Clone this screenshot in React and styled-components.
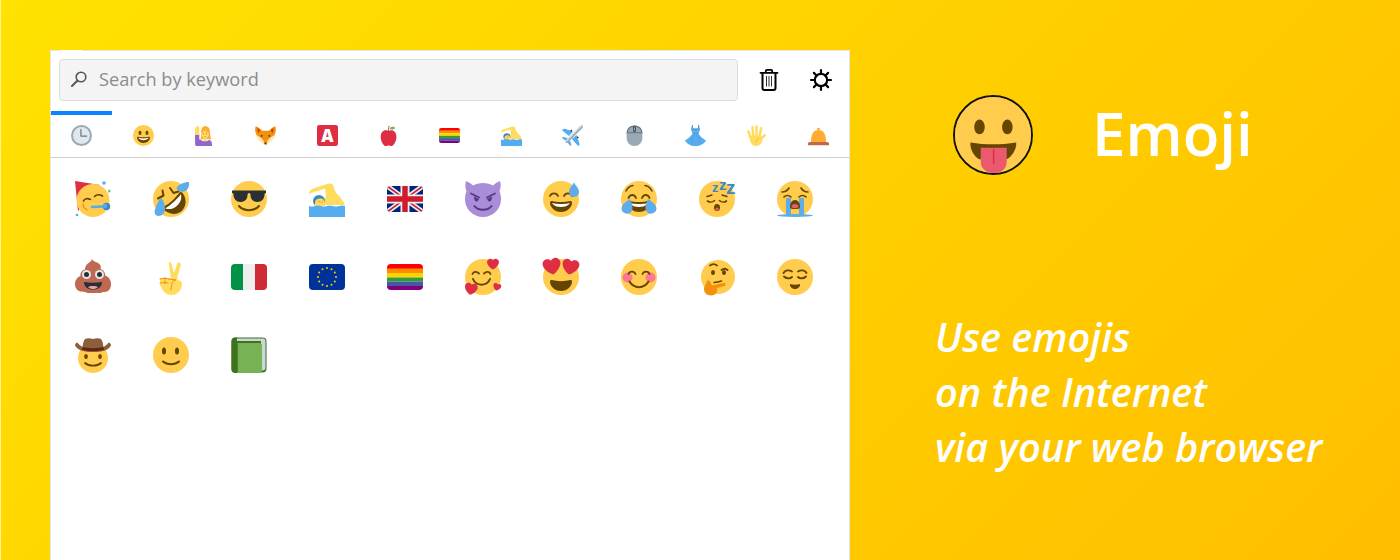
import React from 'react';
import styled, { createGlobalStyle } from 'styled-components';

const YELLOW = '#FFCC4D';
const BROWN = '#664500';
const SKIN = '#FFDC5D';
const BLUE = '#5DADEC';
const RED = '#DD2E44';
const ORANGE = '#F19020';

const HEART = 'M35.885 11.833c0-5.45-4.418-9.868-9.867-9.868-3.308 0-6.227 1.633-8.018 4.129-1.791-2.496-4.71-4.129-8.017-4.129-5.45 0-9.868 4.417-9.868 9.868 0 .772.098 1.52.266 2.241C1.751 22.587 11.216 31.568 18 34.034c6.783-2.466 16.249-11.447 17.617-19.959.17-.721.268-1.469.268-2.242z';

const Face = ({ cx = 18, cy = 18, r = 18 }) => <circle cx={cx} cy={cy} r={r} fill={YELLOW} />;
const Line = ({ d, w = 1.8, c = BROWN }) => <path d={d} fill="none" stroke={c} strokeWidth={w} strokeLinecap="round" strokeLinejoin="round" />;
const Grin = () => (
  <>
    <path fill={BROWN} d="M18 21c-3.6 0-6-.4-9-1-.7-.1-2 0-2 2 0 4 4.6 9 11 9s11-5 11-9c0-2-1.3-2.1-2-2-3 .6-5.4 1-9 1z" />
    <path fill="#fff" d="M9 22s3 1 9 1 9-1 9-1-2 4-9 4-9-4-9-4z" />
  </>
);
const Eyes = ({ x1 = 12, x2 = 24, y = 13.5, rx = 2.5, ry = 3.5 }) => (
  <>
    <ellipse cx={x1} cy={y} rx={rx} ry={ry} fill={BROWN} />
    <ellipse cx={x2} cy={y} rx={rx} ry={ry} fill={BROWN} />
  </>
);
const Heart = ({ x, y, s, rot = 0 }) => (
  <path fill={RED} d={HEART} transform={`translate(${x} ${y}) rotate(${rot}) scale(${s / 36}) translate(-18 -18)`} />
);
const Zed = ({ x, y, s }) => (
  <text x={x} y={y} fontFamily="'Liberation Sans', sans-serif" fontWeight="700" fontSize={s} fill="#3B88C3">z</text>
);
const Flag = ({ children }) => (
  <>
    <clipPath id="flagClip"><rect x="0" y="5" width="36" height="26" rx="4" /></clipPath>
    <g clipPath="url(#flagClip)">{children}</g>
  </>
);
const RainbowFlag = () => (
  <Flag>
    <rect y="5" width="36" height="5" fill="#FF0000" />
    <rect y="9.5" width="36" height="4.5" fill="#FF8C00" />
    <rect y="14" width="36" height="4.5" fill="#FFD500" />
    <rect y="18.5" width="36" height="4" fill="#359B35" />
    <rect y="22.5" width="36" height="4.5" fill="#44599F" />
    <rect y="27" width="36" height="4" fill="#800080" />
  </Flag>
);
const Swimmer = () => (
  <>
    <path fill={SKIN} d="M0 11c2-3 5-4 9-5 4-1 8-3 12-3.5 2-.3 3 .8 3.5 2.5 .5 3 1.5 6 4 8.5 3 3 6 6.5 7.5 10.500H14c1-4 2-7 3-9.500-.5-3-.5-5-1-7-4 1.500-8 2.500-11 3.500-2 .7-4 1-5 1.500z" />
    <circle cx="10" cy="20" r="6" fill="#3B88C3" />
    <path fill={SKIN} d="M6 22c0-3 2-4.500 5-4.500 3 0 5 2 5 4.500v3H6z" />
    <Line d="M9 21l2-1M12 21.500l2-1" w={0.8} c={ORANGE} />
    <path fill="#55ACEE" d="M0 25c2 .8 4 .8 6 0s4-.8 6 0 4 .8 6 0 4-.8 6 0 4 .8 6 0 4-.8 6 0v11H0z" />
  </>
);

const ART = {
  clock: (
    <>
      <circle cx="18" cy="18" r="18" fill="#99AAB5" />
      <circle cx="18" cy="18" r="14.500" fill="#E1E8ED" />
      <Line d="M17 7.500V19h10" w={2} c="#67757F" />
    </>
  ),
  smiley: <><Face /><Grin /><Eyes /></>,
  woman: (
    <g transform="translate(1 0) scale(.85 1)">
      <path fill="#FFAC33" d="M21 1.500c6 0 10 4 10 10 0 5 1 9 3 13H12c1.500-4 1-7 1-11 0-6 3-12 8-12z" />
      <path fill="#9266CC" d="M1 16h8.500v9H12c2 2 4 3 8 3s7-1 9-2.500c4 0 6 3 6 7V36H5c-2.500 0-4-1.500-4-4z" />
      <path fill={SKIN} d="M1.500 17L.7 7c-.2-1.500 1.200-1.700 1.500-.5L2.700 3.500c.2-1.200 1.800-1.200 2 0l.5-2c.3-1.200 1.800-1 2 .2l.5 2.500c.6-1 2-.5 1.800.8L9.500 17z" />
      <circle cx="21" cy="15" r="7.500" fill={SKIN} />
      <path fill={SKIN} d="M18 20h6v6c0 2-6 2-6 0z" />
      <path fill="#FFAC33" d="M13 13c3 0 6-1 8-4 1.500 3 5 4 8 4l-1-6-7-3-6 3z" />
      <Eyes x1={18} x2={24} y={15} rx={0.9} ry={1} />
      <Line d="M19 19.500c1 .7 3 .7 4 0" w={0.8} c="#C1694F" />
    </g>
  ),
  fox: (
    <>
      <path fill="#F4900C" d="M1 2c5 1 9 5 11 8h12c2-3 6-7 11-8 1 5 1 10-1 14l-4 9-10 9h-4L6 25l-4-9C0 12 0 7 1 2z" />
      <path fill="#C1440E" d="M4 5.500c2.500 1 4 2.500 5 4.500L6 13.500C4.500 11 4 8 4 5.500zM32 5.500c-2.500 1-4 2.500-5 4.500l3 3.500c1.500-2.500 2-5.500 2-8z" />
      <path fill="#FFE8B6" d="M0.500 17C5 17.500 10 21 14 26l3 8-2 0-9-8zM35.500 17C31 17.500 26 21 22 26l-3 8 2 0 9-8z" />
      <circle cx="11.500" cy="18.500" r="1.500" fill="#292F33" />
      <circle cx="24.500" cy="18.500" r="1.500" fill="#292F33" />
      <path fill="#292F33" d="M15.500 30.500h5L18 33.500z" />
    </>
  ),
  aButton: (
    <>
      <rect width="36" height="36" rx="4" fill={RED} />
      <text x="18" y="29" textAnchor="middle" fontFamily="'Open Sans', sans-serif" fontWeight="800" fontSize="29" fill="#fff">A</text>
    </>
  ),
  apple: (
    <g transform="translate(3 0) scale(.84 1)">
      <path fill={RED} d="M24 9c-3 0-4 1-6 1s-3-1-6-1C7 9 2 13 2 20c0 8 6 16 10 16 3 0 4-1 6-1s3 1 6 1c4 0 10-8 10-16 0-7-5-11-10-11z" />
      <Line d="M17.500 11c0-3 .5-6 1.500-9" w={1.200} c="#662113" />
      <path fill="#77B255" d="M20 7c1-3 4-4.500 8-4 2 .5 3 1.500 3.500 2.500C29 7.500 24 8.500 20 7z" />
    </g>
  ),
  rainbow: <RainbowFlag />,
  swimmer: <Swimmer />,
  plane: (
    <>
      <path fill="#55ACEE" d="M19 11L5 6.500c-1.500-.4-3.500.5-5 2.500l12 10zM25 17l5 15c.4 1.500-.5 3-2.500 4L17 24zM10 22.500L1.500 20 0 22l6 5zM13.500 26l2.500 8-2 2-4.500-6z" />
      <path fill="#CCD6DD" d="M35.500.5c1 1.500 0 4-2 6L11.500 28.500c-1.500 1.500-4.500 3-5.500 2s.5-4 2-5.500L29.500 3c2-2 4.500-3.500 6-2.500z" />
      <path fill="#99AAB5" d="M35.500.8c1 1.500 0 4-2 5.700L11.500 28.500c-1.500 1.500-4.500 3-5.500 2z" />
      <circle cx="27" cy="21" r="1.500" fill="#292F33" />
      <circle cx="16" cy="9.500" r="1.500" fill="#292F33" />
    </>
  ),
  mouse: (
    <>
      <rect x="4.500" y="1" width="27" height="35" rx="13" fill="#99AAB5" />
      <path fill="#66757F" d="M4.500 14C4.500 6 10 1 18 1s13.500 5 13.500 13z" />
      <path fill="#99AAB5" d="M6.500 12.500C7 7 11 3 16.500 2.800v9.700zM29.500 12.500C29 7 25 3 19.500 2.800v9.700z" />
      <rect x="15.500" y="2" width="5" height="10" rx="2.500" fill="#292F33" opacity=".75" />
      <rect x="17" y="4" width="2" height="6" rx="1" fill="#99AAB5" />
    </>
  ),
  dress: (
    <>
      <path fill="#3B88C3" d="M12 0h1.500v5c2 1.500 7 1.500 9 0V0H24l1 8-3 8h-8l-3-8z" />
      <path fill="#55ACEE" d="M12 3c.5 3 2.500 5 6 5s5.500-2 6-5l1.500 6-3 5c3 5 8 9 13.500 12.500C33 32 26 36 18 36S3 32 0 26.500C5.500 23 10.500 19 13.500 14l-3-5z" />
      <Line d="M14 14.500h8" w={0.7} c="#3B88C3" />
      <Line d="M15 18l-5 14M21 18l5 14" w={0.5} c="#3B88C3" />
    </>
  ),
  hand: (
    <>
      <Line d="M7.500 21L4 11M12.500 18L11 4M18 18V2.500M23 19L26 5.500" w={4.200} c={SKIN} />
      <Line d="M26 24L32 17.500" w={4.200} c={SKIN} />
      <path fill={SKIN} d="M6 18h20l2 8c-1 6-6 10-11 10-6 0-11-5-11-18z" />
      <Line d="M17 30c0-3 2-6 5-8" w={0.8} c={ORANGE} />
    </>
  ),
  bell: (
    <>
      <circle cx="18" cy="7" r="2.500" fill="#FFAC33" />
      <path fill="#FFAC33" d="M5 30C5 16 9 8.500 18 8.500S31 16 31 30z" />
      <path fill="#C1694F" d="M3 29h30c1.500 0 3 1.500 3 3v2.500H0V32c0-1.500 1.500-3 3-3z" />
    </>
  ),
  party: (
    <>
      <path fill={RED} d="M0 0l25 4L3 30z" />
      <circle cx="18" cy="19.500" r="16.500" fill={YELLOW} />
      <Line d="M8.500 20c1-2.500 4-3 7-1.500M19.500 15.500c1.500-2 5-2.500 8-.5" w={1.6} />
      <Line d="M8 23c-.5 2.500 2 5.500 4 5.500" w={1.400} c={ORANGE} />
      <Line d="M17 26l10-.5" w={2.500} c="#55ACEE" />
      <circle cx="31.500" cy="25.500" r="3.700" fill="#3B88C3" />
      <circle cx="30" cy="25" r="2.200" fill="#55ACEE" />
      <circle cx="29" cy="2" r="1.800" fill="#55ACEE" />
      <circle cx="2" cy="34" r="1.300" fill="#55ACEE" />
      <path fill="#77B255" d="M33 8.500l1.500 1 .5-2 .5 3-2 1.500z" />
    </>
  ),
  rofl: (
    <>
      <Face />
      <g transform="rotate(-42 18 18)">
        <path fill={BROWN} d="M18 20c-3.600 0-6.500-.4-10-1-1-.1-2.500 0-2.500 2 0 6 5 13 12.500 13s12.500-7 12.500-13c0-2-1.500-2.100-2.500-2-3.500.6-6.400 1-10 1z" />
        <path fill="#fff" d="M7.500 21s3.500 1 10.500 1 10.500-1 10.500-1-2 6-10.500 6-10.500-6-10.500-6z" />
      </g>
      <Line d="M5 17.500l5.500-3-1-5M17 7l3.500 5 5-1.500" w={2} />
      <path fill={BLUE} d="M36 1c.5 3.500-.5 8-5 9.500-3 1-6.500-.5-7.500-3.500 2-3.500 7-6 12.500-6z" />
      <path fill={BLUE} d="M8 17c3 2.500 4 7 4 11 0 4-3 7-6.500 7S1 32 2 28.500C3 25 5 20 8 17z" />
    </>
  ),
  cool: (
    <>
      <Face />
      <path fill="#292F33" d="M1 9.500h34v2.500c-1 0-1.500.5-1.500 1.500 0 4.500-3 7.500-7 7.500-4.500 0-7-3-7-7 0-1-.5-2-1.500-2s-1.500 1-1.500 2c0 4-2.500 7-7 7-4 0-7-3-7-7.500 0-1-.5-1.500-1.500-1.500z" />
      <Line d="M8 25c4.500 5.500 15.500 5.500 20 0" w={2} />
    </>
  ),
  uk: (
    <Flag>
      <rect y="5" width="36" height="26" fill="#00247D" />
      <path d="M0 5l36 26M36 5L0 31" stroke="#EEE" strokeWidth="5" />
      <path d="M0 5l36 26M36 5L0 31" stroke="#CF1B2B" strokeWidth="1.600" />
      <path d="M18 5v26M0 18h36" stroke="#EEE" strokeWidth="9" />
      <path d="M18 5v26M0 18h36" stroke="#CF1B2B" strokeWidth="5.400" />
    </Flag>
  ),
  imp: (
    <>
      <path fill="#AA8DD8" d="M1 0c2 .5 5 2.500 7 4.500C10.500 3 14 2 18 2s7.500 1 10 2.500c2-2 5-4 7-4.500 1 3 1 7-.5 10 1 2.500 1.500 5 1.500 8.500 0 9.500-8 17.500-18 17.500S0 28 0 18.500c0-3.500.5-6 1.500-8.500C0 7 0 3 1 0z" />
      <path fill="#553788" d="M9 15.500l5 2.500c-.5 1.500-1.500 2.500-2.500 2.500-1.500 0-2.500-2-2.500-5zM27 15.500L22 18c.5 1.500 1.500 2.500 2.500 2.500 1.500 0 2.500-2 2.500-5z" />
      <Line d="M6 12.500L14 16.500M30 12.500L22 16.500" w={1.800} c="#553788" />
      <Line d="M9.500 25c3.500 5 13.500 5 17 0" w={2} c="#553788" />
    </>
  ),
  sweat: (
    <>
      <Face />
      <Grin />
      <Line d="M7 15c1.500-3.500 6.500-3.500 8 0M21 15c1.500-3.500 6.500-3.500 8 0" />
      <path fill={BLUE} d="M31 1.500c1.500 3 5 5.500 5 9.500a5 5 0 0 1-10 0c0-4 3.500-6.500 5-9.500z" />
    </>
  ),
  joy: (
    <>
      <Face />
      <Grin />
      <Line d="M7.500 17c1.500-4 6-4 7.500 0M21 17c1.500-4 6-4 7.500 0" />
      <Line d="M5 10c1.500-3.500 4-5 7-5.500M31 10c-1.500-3.500-4-5-7-5.500" w={1.500} />
      <path fill={BLUE} d="M9 18c1 3 3 6 2.500 9a5.500 5.500 0 0 1-11 .5c0-3.500 4.500-7 8.500-9.500zM27 18c-1 3-3 6-2.500 9a5.500 5.500 0 0 0 11 .5c0-3.500-4.500-7-8.500-9.500z" />
    </>
  ),
  sleep: (
    <>
      <Face />
      <Line d="M8.500 20c2 1.500 5 1.500 7-.5M20.500 19.500c2 2 5 2 7 .5" w={1.600} />
      <Line d="M8 15.500l5-1.500M28 15.500l-5-1.500" w={1.400} />
      <ellipse cx="18" cy="26.500" rx="3" ry="3.500" fill={BROWN} />
      <ellipse cx="18" cy="28" rx="1.800" ry="1.500" fill="#E75A70" />
      <Zed x={13} y={11} s={13} />
      <Zed x={20} y={8.500} s={15} />
      <Zed x={27} y={13} s={19} />
    </>
  ),
  sob: (
    <>
      <Face />
      <Line d="M5 11c2.500 0 5.500-1.500 7-4M31 11c-2.500 0-5.500-1.500-7-4" w={1.600} />
      <Line d="M7 16c1.500-2 5-2 7 0M22 16c2-2 5.500-2 7 0" w={1.600} />
      <path fill={BLUE} d="M9 17h5v17H9zM22 17h5v17h-5z" />
      <ellipse cx="18" cy="34.500" rx="18" ry="1.500" fill={BLUE} />
      <path fill={BROWN} d="M18 19c-3 0-5 3-5 7 0 2 2 2 5 2s5 0 5-2c0-4-2-7-5-7z" />
      <path fill="#E75A70" d="M14.500 26c0-2 1.500-3 3.500-3s3.500 1 3.500 3c0 1.500-7 1.500-7 0z" />
    </>
  ),
  poop: (
    <>
      <path fill="#BF6952" d="M17 0c1 2 2.500 2.500 5 3.500 3.500 1.500 4.500 4 3.500 6.500 3 1 5 3.500 4.500 6.500 3.500 1 6 4.500 6 8 0 4-1 6-3 7.500-1.500 1-3 .8-5 1-2 1.500-6 1-9 1s-6 .5-9-1c-3-.2-5-.2-7-1.500C1 30 0 28 0 25c0-4 2.500-7 5.500-8-.5-3 1.500-6 4.500-6.500C10 6 13 4.500 15 3c1-.8 1.500-1.800 2-3z" />
      <circle cx="11.500" cy="15.500" r="4.500" fill="#E1E8ED" />
      <circle cx="24.500" cy="15.500" r="4.500" fill="#E1E8ED" />
      <circle cx="11.500" cy="15.500" r="2.500" fill="#292F33" />
      <circle cx="24.500" cy="15.500" r="2.500" fill="#292F33" />
      <path fill="#292F33" d="M9 23c6 1 12 1 18 0 0 5-4 7.500-9 7.500S9 28 9 23z" />
      <path fill="#E8A0A8" d="M13 28c1-1.500 9-1.500 10 0-1.500 1.500-3 2-5 2s-3.500-.5-5-2z" />
    </>
  ),
  victory: (
    <g transform="translate(0 3)">
      <path fill={SKIN} d="M16 0c1.500-.3 2.200.5 2.500 2L21 11 24 2c.4-1.300 1.500-1.800 2.600-1.300 1.100.5 1.400 1.500 1 2.800L24 17l5 3c.5 7-4 13-10.500 13C13 33 9 29 8 24l1-5 9-2-2-14c-.2-1.500-.5-2.700 0-3z" />
      <path fill={SKIN} d="M7 16h11v8H7z" />
      <Line d="M7 17c3-1 6-1 9 0M7 21c3-.5 5-.5 8 0M16 17l7 1c-3 .5-4 2-4 4l-1 6M12 15.500v6.500" w={1} c={ORANGE} />
    </g>
  ),
  italy: (
    <Flag>
      <rect y="5" width="12.500" height="26" fill="#009246" />
      <rect x="12" y="5" width="12.500" height="26" fill="#EEE" />
      <rect x="24" y="5" width="12" height="26" fill="#CE2B37" />
    </Flag>
  ),
  eu: (
    <Flag>
      <rect y="5" width="36" height="26" fill="#003399" />
      {Array.from({ length: 12 }, (_, i) => (
        <circle
          key={i}
          cx={18 + 9 * Math.sin((i * Math.PI) / 6)}
          cy={18 - 9 * Math.cos((i * Math.PI) / 6)}
          r="1"
          fill="#FFCC00"
        />
      ))}
    </Flag>
  ),
  hearts: (
    <>
      <Face />
      <Line d="M7.500 15c1-2.500 4-3 6.500-.5M19 14.500c2.500-2.500 5.500-2 6.500.5" />
      <Line d="M8 20c3 7.500 14 7.500 17 0" w={2} />
      <Heart x={28} y={5} s={12} />
      <Heart x={6} y={30} s={13} rot={10} />
      <Heart x={32} y={28} s={8} rot={15} />
    </>
  ),
  heartEyes: (
    <>
      <Face />
      <path fill={BROWN} d="M8.500 21c6 1.500 13 1.500 19 0 .8-.2 1.500.5 1.500 1.500C29 27 24.500 32 18 32S7 27 7 22.500c0-1 .7-1.700 1.500-1.500z" />
      <Heart x={9} y={7.500} s={18} rot={-10} />
      <Heart x={27.500} y={8} s={17} rot={10} />
    </>
  ),
  blush: (
    <>
      <Face />
      <circle cx="6.500" cy="18.500" r="5" fill="#FF7892" />
      <circle cx="29.500" cy="18.500" r="5" fill="#FF7892" />
      <Line d="M7.500 15c1-3 5.500-3.500 7 0M21.500 15c1.500-3.500 6-3 7 0" />
      <Line d="M8.500 22.500c4.500 7.500 14.500 7.500 19 0" w={2} />
    </>
  ),
  think: (
    <>
      <circle cx="19" cy="18" r="17" fill={YELLOW} />
      <Line d="M11 6.500c2-1.500 5-1.500 7 0M22.500 11c2-1.500 4.500-1.500 6 0" />
      <Eyes x1={14} x2={25} y={13.500} rx={2} ry={2.500} />
      <Line d="M15 23.500c2.500-.3 5-.8 7.500-1.500" w={1.600} />
      <path fill="#F4900C" d="M8 21.500c2.500-.5 3.500.5 4 3l1 2 11-2.500c1.500-.4 2.500.3 2.600 1.300.1 1-.6 1.600-2 2l-6.600 1.700c1 3-1 7.500-6 7.500-4.500 0-7-3-7-6.500 0-3 2-5 2.500-6.500.4-1 .5-2 .5-2z" />
    </>
  ),
  relieved: (
    <>
      <Face />
      <Line d="M6.500 14c1.500-3 5.500-3.500 8.500-1.500M21 12.500c3-2 7-1.500 8.500 1.500" />
      <Line d="M7 17.500c2 2 6 2.500 8 .5M21 18c2 2 6 1.500 8-.5" />
      <path fill={BROWN} d="M13 25c3 1 7 1 10 0 .5 2.500-2 5-5 5s-5.500-2.500-5-5z" />
    </>
  ),
  cowboy: (
    <>
      <circle cx="18" cy="21" r="15" fill={YELLOW} />
      <Eyes x1={11} x2={25} y={19.500} rx={1.800} ry={2.500} />
      <Line d="M10 26c4 3.500 12 3.500 16 0" w={1.800} />
      <path fill="#8B5E3C" d="M10 2c2-1 5-1 8 0 3-1 6-1 8 0 2 2.500 2 5.500 2.500 8 2-1 4-3 5-4.500 2 .5 2.500 2 2.500 3-3 5-9 6.500-18 6.500S3 13.500 0 8.500C0 7.500.5 6 2.500 5.500c1 1.500 3 3.500 5 4.500.5-2.500.5-5.500 2.500-8z" />
      <path fill="#662113" d="M7.500 10C13 11.500 23 11.500 28.500 10l.5 2.500c-6 2-16 2-22 0z" />
    </>
  ),
  slight: (
    <>
      <Face />
      <Eyes x1={11} x2={24} y={14} rx={2} ry={3.500} />
      <Line d="M10 24.500c4 3.500 12 3.500 16 0" w={2} />
    </>
  ),
  book: (
    <>
      <rect x="0.500" y="0.500" width="35" height="35" rx="4" fill="#3E721D" />
      <path fill="#CCD6DD" d="M6 1.500h26c1.500 0 2.500 1 2.500 2.500v27c0 1.500-1 2.500-2.500 2.500H30V4H6z" />
      <path fill="#77B255" d="M6.500 6h22c1.500 0 2.500 1 2.500 2.500V33c0 1.500-1 3-3 3H6.500z" />
      <path fill="#3E721D" d="M0.500 4c0-2 1.500-3.500 3.500-3.500h2.500C4.500 1.500 4 3 4 4.500s1 2 2.500 2V36H4c-2 0-3.500-1.500-3.500-3.500z" />
    </>
  ),
  tongue: (
    <>
      <Face />
      <Eyes x1={11.600} x2={24.800} y={14.200} rx={2.500} ry={3.500} />
      <path fill={BROWN} d="M7.300 21.500c7 1.200 14.500 1.200 21.700 0 .3 3.500-2.500 7-4.500 8h-13c-2-1-4.500-4.500-4.200-8z" />
      <path fill="#EA596E" d="M12.200 24h12.300v6.500c0 3.500-2.700 5.500-6.100 5.500s-6.200-2-6.200-5.500z" />
      <Line d="M18.300 25v6.500" w={0.7} c={RED} />
    </>
  ),
};

const TABS = ['clock', 'smiley', 'woman', 'fox', 'aButton', 'apple', 'rainbow', 'swimmer', 'plane', 'mouse', 'dress', 'hand', 'bell'];
const RECENT = [
  'party', 'rofl', 'cool', 'swimmer', 'uk', 'imp', 'sweat', 'joy', 'sleep', 'sob',
  'poop', 'victory', 'italy', 'eu', 'rainbow', 'hearts', 'heartEyes', 'blush', 'think', 'relieved',
  'cowboy', 'slight', 'book',
];

const Emoji = ({ name, size }) => (
  <EmojiSvg viewBox="0 0 36 36" $size={size}>{ART[name]}</EmojiSvg>
);

const App = () => (
  <>
    <GlobalStyle />
    <Page>
      <Popup>
        <TopNotch />
        <Toolbar>
          <SearchBox>
            <svg width="18" height="18" viewBox="0 0 18 18">
              <circle cx="11" cy="7" r="4.800" fill="none" stroke="#555" strokeWidth="1.600" />
              <path d="M7.500 10.500L2 16" stroke="#555" strokeWidth="2" strokeLinecap="round" />
            </svg>
            <SearchText>Search by keyword</SearchText>
          </SearchBox>
          <ToolButton>
            <svg width="24" height="24" viewBox="0 0 24 24">
              <path d="M8.800 4V3c0-.8.5-1.200 1.200-1.200h4c.7 0 1.200.4 1.200 1.200v1" fill="none" stroke="#000" strokeWidth="1.800" />
              <path d="M3.500 4.800h17" stroke="#000" strokeWidth="1.800" strokeLinecap="round" />
              <path d="M5.500 5v15c0 1.300.9 2 2 2h9c1.100 0 2-.7 2-2V5" fill="none" stroke="#000" strokeWidth="2" />
              <path d="M9.500 8v10.500M12 8v10.500M14.500 8v10.500" stroke="#333" strokeWidth="1" />
            </svg>
          </ToolButton>
          <ToolButton>
            <svg width="24" height="24" viewBox="0 0 24 24">
              <circle cx="12" cy="12" r="6.200" fill="none" stroke="#000" strokeWidth="2.200" />
              <path d="M12 2v4M12 18v4M2 12h4M18 12h4M4.900 4.900l2.800 2.800M16.300 16.300l2.800 2.800M4.900 19.100l2.800-2.800M16.300 7.700l2.800-2.800" stroke="#000" strokeWidth="2.200" strokeLinecap="round" />
            </svg>
          </ToolButton>
        </Toolbar>
        <TabRow>
          {TABS.map((name, i) => (
            <Tab key={name} $active={i === 0}>
              <Emoji name={name} size={21} />
            </Tab>
          ))}
        </TabRow>
        <EmojiGrid>
          {RECENT.map((name) => (
            <EmojiCell key={name}>
              <Emoji name={name} size={36} />
            </EmojiCell>
          ))}
        </EmojiGrid>
      </Popup>
      <Promo>
        <TitleRow>
          <BigIcon>
            <Emoji name="tongue" size={76} />
          </BigIcon>
          <Title>Emoji</Title>
        </TitleRow>
        <Tagline>
          Use emojis<br />
          on the Internet<br />
          via your web browser
        </Tagline>
      </Promo>
    </Page>
  </>
);

export default App;

const GlobalStyle = createGlobalStyle`
  html, body {
    margin: 0;
    padding: 0;
  }
  body {
    font-family: "Open Sans", sans-serif;
  }
`;

const Page = styled.div`
  display: flex;
  width: 1400px;
  height: 560px;
  box-sizing: border-box;
  padding: 50px 0 0 49px;
  overflow: hidden;
  border-left: 1px solid #fff3a0;
  background: linear-gradient(135deg, #ffe200 0%, #ffbe00 100%);
`;

const Popup = styled.div`
  position: relative;
  display: flex;
  flex-direction: column;
  width: 800px;
  height: 510px;
  box-sizing: border-box;
  background: #fff;
  border: 1px solid #e6e6e6;
  border-bottom: none;
`;

const TopNotch = styled.div`
  position: absolute;
  top: -1px;
  left: 9px;
  width: 22px;
  height: 1px;
  background: #fff;
`;

const Toolbar = styled.div`
  display: flex;
  align-items: center;
  height: 60px;
  box-sizing: border-box;
  padding: 0 2px 2px 8px;
`;

const SearchBox = styled.div`
  display: flex;
  align-items: center;
  flex: 1;
  gap: 11px;
  height: 41.5px;
  margin-right: 5px;
  box-sizing: border-box;
  padding: 0 0 2px 10px;
  background: #f4f4f4;
  border: 1.5px solid #dcdcdc;
  border-radius: 4px;
`;

const SearchText = styled.span`
  font-size: 18.2px;
  color: #8c8c8c;
`;

const ToolButton = styled.div`
  display: flex;
  align-items: center;
  justify-content: center;
  width: 52px;
  height: 41px;
  flex: none;
`;

const TabRow = styled.div`
  display: grid;
  grid-template-columns: repeat(13, 1fr);
  height: 46.5px;
  box-sizing: border-box;
  border-bottom: 1.5px solid #cfcfcf;
`;

const Tab = styled.div`
  display: flex;
  align-items: center;
  justify-content: center;
  border-top: 4px solid ${(p) => (p.$active ? '#0a84ff' : 'transparent')};
`;

const EmojiGrid = styled.div`
  display: grid;
  grid-template-columns: repeat(10, 78px);
  grid-auto-rows: 78px;
  padding: 2.5px 0 0 3px;
`;

const EmojiCell = styled.div`
  display: flex;
  align-items: center;
  justify-content: center;
`;

const EmojiSvg = styled.svg`
  display: block;
  overflow: visible;
  width: ${(p) => p.$size}px;
  height: ${(p) => p.$size}px;
`;

const Promo = styled.div`
  display: flex;
  flex-direction: column;
  padding-left: 85px;
  color: #fff;
`;

const TitleRow = styled.div`
  display: flex;
  align-items: center;
  gap: 59px;
  padding: 45px 0 0 18px;
`;

const BigIcon = styled.div`
  width: 76px;
  height: 76px;
  border: 2px solid #111;
  border-radius: 50%;
`;

const Title = styled.h1`
  margin: 0 0 4px;
  font-size: 60px;
  font-weight: 600;
  line-height: 76px;
`;

const Tagline = styled.p`
  margin: 135px 0 0;
  font-size: 39.7px;
  font-style: italic;
  font-weight: 600;
  line-height: 55px;
  white-space: nowrap;
`;
